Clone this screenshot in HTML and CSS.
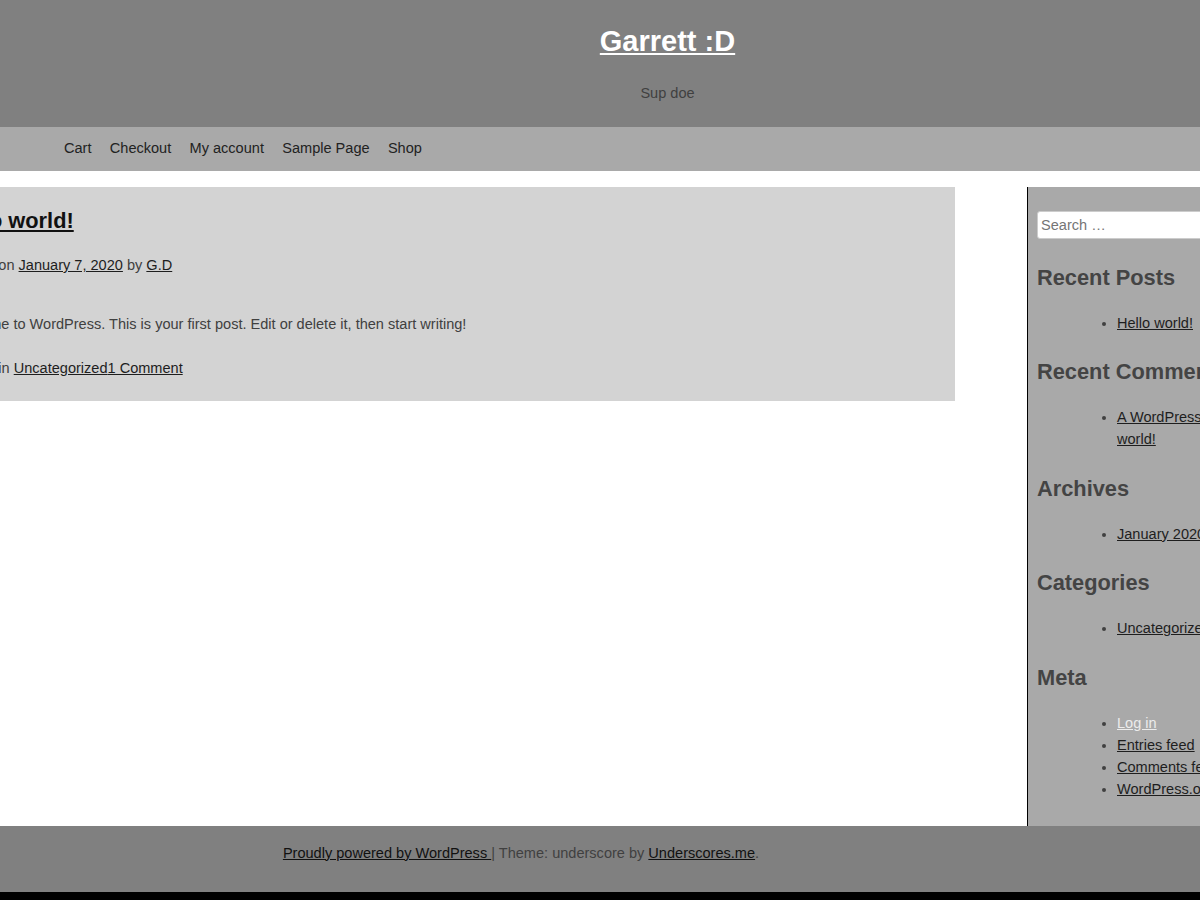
FILE: index.html
```html
<!DOCTYPE html>
<html lang="en">
<head>
<meta charset="utf-8">
<title>Garrett :D</title>
<link rel="stylesheet" href="styles.css">
</head>
<body>
<div class="page">
  <header class="site-header">
    <div class="branding">
      <h1 class="site-title"><a href="#">Garrett :D</a></h1>
      <p class="site-description">Sup doe</p>
    </div>
  </header>
  <nav class="main-nav">
    <ul class="menu">
      <li><a href="#">Cart</a></li>
      <li><a href="#">Checkout</a></li>
      <li><a href="#">My account</a></li>
      <li><a href="#">Sample Page</a></li>
      <li><a href="#">Shop</a></li>
    </ul>
  </nav>
  <div class="content-row">
    <main class="site-main">
      <article class="post">
        <h2 class="entry-title"><a href="#">Hello world!</a></h2>
        <div class="entry-meta">Posted on <a href="#">January 7, 2020</a> by <a href="#">G.D</a></div>
        <div class="entry-content">Welcome to WordPress. This is your first post. Edit or delete it, then start writing!</div>
        <div class="entry-footer">Posted in <a href="#">Uncategorized</a><a href="#">1 Comment</a></div>
      </article>
    </main>
    <aside class="sidebar">
      <section class="widget widget-search">
        <input class="search-field" type="search" placeholder="Search …">
      </section>
      <section class="widget">
        <h2 class="widget-title">Recent Posts</h2>
        <ul class="widget-list">
          <li><a href="#">Hello world!</a></li>
        </ul>
      </section>
      <section class="widget">
        <h2 class="widget-title">Recent Comments</h2>
        <ul class="widget-list">
          <li><a href="#">A WordPress Commenter on Hello world!</a></li>
        </ul>
      </section>
      <section class="widget">
        <h2 class="widget-title">Archives</h2>
        <ul class="widget-list">
          <li><a href="#">January 2020</a></li>
        </ul>
      </section>
      <section class="widget">
        <h2 class="widget-title">Categories</h2>
        <ul class="widget-list">
          <li><a href="#">Uncategorized</a></li>
        </ul>
      </section>
      <section class="widget">
        <h2 class="widget-title">Meta</h2>
        <ul class="widget-list">
          <li><a class="light" href="#">Log in</a></li>
          <li><a href="#">Entries feed</a></li>
          <li><a href="#">Comments feed</a></li>
          <li><a href="#">WordPress.org</a></li>
        </ul>
      </section>
    </aside>
  </div>
  <footer class="site-footer">
    <div class="site-info"><a href="#">Proudly powered by WordPress </a>| Theme: underscore by <a href="#">Underscores.me</a>.</div>
  </footer>
</div>
</body>
</html>
```
FILE: styles.css
```css
html, body {
  margin: 0;
  padding: 0;
  background: #000;
}

.page {
  overflow: hidden;
  background: #fff;
  font-family: "Liberation Sans", Arial, sans-serif;
  font-size: 14.55px;
  line-height: 22px;
  color: #404040;
}

a {
  color: #1e1e1e;
}

/* header */
.site-header {
  background: #808080;
  height: 127px;
  box-sizing: border-box;
  padding-top: 24px;
}

.branding {
  width: 1335px;
  text-align: center;
}

.site-title {
  margin: 0;
  font-size: 29px;
  line-height: 34px;
  font-weight: bold;
}

.site-title a {
  color: #fff;
}

.site-description {
  margin: 24px 0 0;
  line-height: 22px;
  color: #404040;
}

/* nav */
.main-nav {
  background: #a9a9a9;
  height: 44px;
  box-sizing: border-box;
  padding: 10px 0 12px;
}

.menu {
  list-style: none;
  margin: 0;
  padding: 0 0 0 64px;
  display: flex;
  gap: 18.3px;
}

.menu a {
  color: #222;
  text-decoration: none;
}

/* content */
.content-row {
  display: flex;
  align-items: flex-start;
  gap: 72px;
  margin: 16px 0 0 -72px;
}

.site-main {
  flex: 0 0 1027px;
}

.post {
  background: #d3d3d3;
  height: 214px;
  box-sizing: border-box;
  padding: 21px 0 0 21px;
}

.entry-title {
  margin: 0;
  font-size: 21.8px;
  line-height: 26px;
  font-weight: bold;
}

.entry-title a {
  color: #111;
}

.entry-meta {
  margin-top: 20px;
}

.entry-content {
  margin-top: 37px;
}

.entry-footer {
  margin-top: 22px;
}

/* sidebar */
.sidebar {
  flex: 0 0 339px;
  box-sizing: border-box;
  background: #a9a9a9;
  border-left: 1px solid #000;
  padding: 24px 9px 0.5px 9px;
}

.widget {
  margin-bottom: 25.5px;
}

.search-field {
  display: block;
  box-sizing: border-box;
  width: 320px;
  height: 28px;
  margin: 0;
  padding: 3px 3px;
  border: 1px solid #ccc;
  border-radius: 3px;
  background: #fff;
  font-family: "Liberation Sans", Arial, sans-serif;
  font-size: 14.55px;
  color: #666;
}

.search-field::placeholder {
  color: #757575;
}

.widget-title {
  margin: 0 0 21px;
  font-size: 21.8px;
  line-height: 26px;
  font-weight: bold;
  color: #444;
}

.widget-list {
  margin: 0;
  padding: 0 0 0 80px;
  list-style: disc;
}

.widget-list a {
  color: #1e1e1e;
}

.widget-list a.light {
  color: #ececec;
}

/* footer */
.site-footer {
  background: #808080;
  height: 66px;
  box-sizing: border-box;
  padding: 16px 0 0;
}

.site-info {
  width: 1042px;
  text-align: center;
  color: #404040;
}

.site-info a {
  color: #111;
}
```
